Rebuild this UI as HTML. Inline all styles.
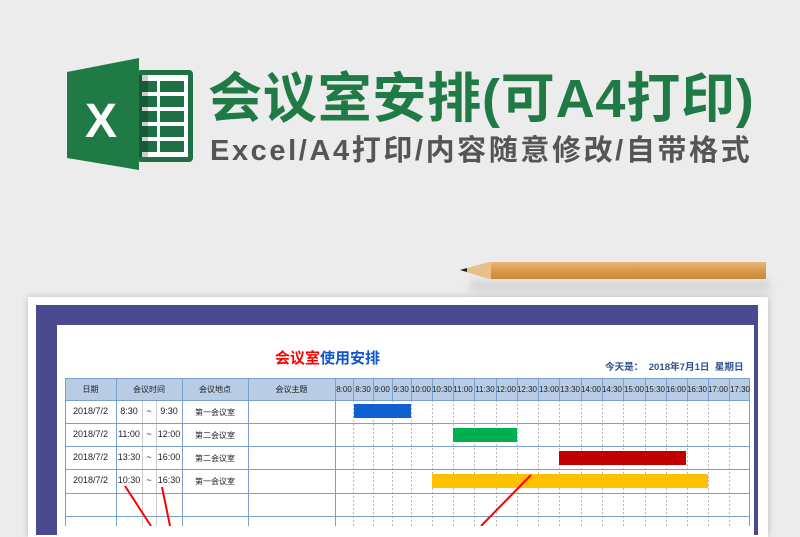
<!DOCTYPE html>
<html><head><meta charset="utf-8"><style>
*{margin:0;padding:0;box-sizing:border-box}
body{width:800px;height:526px;overflow:hidden;background:#ececec;position:relative;font-family:"Liberation Sans","Noto Sans CJK SC",sans-serif}
.a{position:absolute}
.t1{left:208px;top:68px;font-size:54px;font-weight:bold;color:#1f7a45;letter-spacing:0.8px;white-space:nowrap;line-height:62px}
.t2{left:210px;top:133px;font-size:29px;font-weight:bold;color:#555;white-space:nowrap;line-height:36px;letter-spacing:2.6px}
.cell{position:absolute;font-size:9px;color:#222;text-align:center;white-space:nowrap}
.hd{font-size:8px}
</style></head><body>
<svg class="a" style="left:0;top:0" width="200" height="180">
<rect x="137" y="70" width="56" height="92" rx="4" fill="#1e7145"/>
<rect x="142" y="75" width="46" height="82" fill="#fff"/>
<g fill="#1e7145">
<rect x="140" y="81" width="17" height="11"/><rect x="160" y="81" width="24" height="11"/>
<rect x="140" y="96" width="17" height="11"/><rect x="160" y="96" width="24" height="11"/>
<rect x="140" y="111" width="17" height="11"/><rect x="160" y="111" width="24" height="11"/>
<rect x="140" y="126" width="17" height="11"/><rect x="160" y="126" width="24" height="11"/>
<rect x="140" y="141" width="17" height="11"/><rect x="160" y="141" width="24" height="11"/>
</g>
<rect x="138" y="75" width="10" height="82" fill="#000" opacity="0.2"/>
<polygon points="67,72 139,58 139,170 67,158" fill="#1f7a45"/>
<text x="101" y="137" font-family="Liberation Sans" font-weight="bold" font-size="48" fill="#fff" text-anchor="middle">X</text>
</svg>
<div class="a t1">会议室安排(可A4打印)</div>
<div class="a t2">Excel/A4打印/内容随意修改/自带格式</div>
<div class="a" style="left:470px;top:280px;width:300px;height:12px;background:#d6d6d6;filter:blur(4px)"></div>
<div class="a" style="left:490px;top:262px;width:276px;height:17px;background:linear-gradient(#e8b878,#d99a4a 50%,#c9893a)"></div>
<svg class="a" style="left:457px;top:262px" width="36" height="17"><polygon points="3,8 32,0 34,0 34,17 32,17" fill="#e8c08a"/><polygon points="3,8 10,6 10,10" fill="#222"/></svg>
<div class="a" style="left:28px;top:297px;width:740px;height:240px;background:#fff;box-shadow:0 0 6px #bbb"></div>
<div class="a" style="left:36px;top:305px;width:722px;height:230px;background:#4a4a90"></div>
<div class="a" style="left:57px;top:325px;width:697px;height:210px;background:#fff"></div>
<div class="a" style="left:275px;top:347px;font-size:15px;font-weight:bold;white-space:nowrap"><span style="color:#f00">会议室</span><span style="color:#1155cc">使用安排</span></div>
<div class="a" style="left:605px;top:359px;font-size:9.6px;color:#2f4f8f;font-weight:bold;white-space:nowrap">今天是：&nbsp;&nbsp;2018年7月1日&nbsp;&nbsp;星期日</div>
<svg class="a" style="left:0;top:0" width="800" height="526">
<rect x="65" y="378" width="685" height="22" fill="#b8cce4"/>
<g stroke="#bbb" stroke-dasharray="2,2" stroke-width="1">
<line x1="353.5" y1="400" x2="353.5" y2="526"/><line x1="373.5" y1="400" x2="373.5" y2="526"/><line x1="392.5" y1="400" x2="392.5" y2="526"/><line x1="411.5" y1="400" x2="411.5" y2="526"/><line x1="432.5" y1="400" x2="432.5" y2="526"/><line x1="453.5" y1="400" x2="453.5" y2="526"/><line x1="474.5" y1="400" x2="474.5" y2="526"/><line x1="496.5" y1="400" x2="496.5" y2="526"/><line x1="517.5" y1="400" x2="517.5" y2="526"/><line x1="538.5" y1="400" x2="538.5" y2="526"/><line x1="559.5" y1="400" x2="559.5" y2="526"/><line x1="581.5" y1="400" x2="581.5" y2="526"/><line x1="602.5" y1="400" x2="602.5" y2="526"/><line x1="623.5" y1="400" x2="623.5" y2="526"/><line x1="645.5" y1="400" x2="645.5" y2="526"/><line x1="666.5" y1="400" x2="666.5" y2="526"/><line x1="687.5" y1="400" x2="687.5" y2="526"/><line x1="708.5" y1="400" x2="708.5" y2="526"/><line x1="729.5" y1="400" x2="729.5" y2="526"/>
</g>
<g stroke="#ccc"><line x1="142.5" y1="400" x2="142.5" y2="526"/><line x1="156.5" y1="400" x2="156.5" y2="526"/></g>
<g stroke="#7aa0d0" stroke-width="1">
<line x1="65" y1="378.5" x2="750" y2="378.5"/><line x1="65" y1="400.5" x2="750" y2="400.5"/><line x1="65" y1="423.5" x2="750" y2="423.5"/><line x1="65" y1="446.5" x2="750" y2="446.5"/><line x1="65" y1="469.5" x2="750" y2="469.5"/><line x1="65" y1="493.5" x2="750" y2="493.5"/><line x1="65" y1="516.5" x2="750" y2="516.5"/>
<line x1="65.5" y1="378" x2="65.5" y2="526"/><line x1="116.5" y1="378" x2="116.5" y2="526"/><line x1="182.5" y1="378" x2="182.5" y2="526"/><line x1="248.5" y1="378" x2="248.5" y2="526"/><line x1="335.5" y1="378" x2="335.5" y2="526"/><line x1="749.5" y1="378" x2="749.5" y2="526"/>
</g>
<g stroke="#7aa0d0"><line x1="353.5" y1="378" x2="353.5" y2="400"/><line x1="373.5" y1="378" x2="373.5" y2="400"/><line x1="392.5" y1="378" x2="392.5" y2="400"/><line x1="411.5" y1="378" x2="411.5" y2="400"/><line x1="432.5" y1="378" x2="432.5" y2="400"/><line x1="453.5" y1="378" x2="453.5" y2="400"/><line x1="474.5" y1="378" x2="474.5" y2="400"/><line x1="496.5" y1="378" x2="496.5" y2="400"/><line x1="517.5" y1="378" x2="517.5" y2="400"/><line x1="538.5" y1="378" x2="538.5" y2="400"/><line x1="559.5" y1="378" x2="559.5" y2="400"/><line x1="581.5" y1="378" x2="581.5" y2="400"/><line x1="602.5" y1="378" x2="602.5" y2="400"/><line x1="623.5" y1="378" x2="623.5" y2="400"/><line x1="645.5" y1="378" x2="645.5" y2="400"/><line x1="666.5" y1="378" x2="666.5" y2="400"/><line x1="687.5" y1="378" x2="687.5" y2="400"/><line x1="708.5" y1="378" x2="708.5" y2="400"/><line x1="729.5" y1="378" x2="729.5" y2="400"/></g>
<rect x="354" y="404" width="57" height="14" fill="#1060d0"/>
<rect x="453" y="428" width="64" height="14" fill="#00b050"/>
<rect x="559" y="451" width="127" height="14" fill="#c00000"/>
<rect x="432" y="474" width="276" height="14" fill="#ffc000"/>
<g font-family="Liberation Sans" font-size="8" fill="#222" text-anchor="middle">
<text x="344" y="392">8:00</text><text x="363" y="392">8:30</text><text x="382" y="392">9:00</text><text x="401" y="392">9:30</text><text x="421" y="392">10:00</text><text x="442" y="392">10:30</text><text x="463" y="392">11:00</text><text x="485" y="392">11:30</text><text x="506" y="392">12:00</text><text x="527" y="392">12:30</text><text x="549" y="392">13:00</text><text x="570" y="392">13:30</text><text x="591" y="392">14:00</text><text x="612" y="392">14:30</text><text x="634" y="392">15:00</text><text x="655" y="392">15:30</text><text x="676" y="392">16:00</text><text x="697" y="392">16:30</text><text x="718" y="392">17:00</text><text x="740" y="392">17:30</text>
</g>
<g stroke="#f00" stroke-width="2"><line x1="125" y1="486" x2="151" y2="526"/><line x1="162" y1="487" x2="170" y2="526"/><line x1="531" y1="475" x2="481" y2="526"/></g>
</svg>
<div class="cell hd" style="left:65px;top:384px;width:51px">日期</div>
<div class="cell hd" style="left:116px;top:384px;width:66px">会议时间</div>
<div class="cell hd" style="left:182px;top:384px;width:66px">会议地点</div>
<div class="cell hd" style="left:248px;top:384px;width:87px">会议主题</div>
<div class="cell" style="left:65px;top:406px;width:51px">2018/7/2</div><div class="cell" style="left:116px;top:406px;width:26px">8:30</div><div class="cell" style="left:142px;top:406px;width:14px">~</div><div class="cell" style="left:156px;top:406px;width:26px">9:30</div><div class="cell hd" style="left:182px;top:407px;width:66px">第一会议室</div>
<div class="cell" style="left:65px;top:429px;width:51px">2018/7/2</div><div class="cell" style="left:116px;top:429px;width:26px">11:00</div><div class="cell" style="left:142px;top:429px;width:14px">~</div><div class="cell" style="left:156px;top:429px;width:26px">12:00</div><div class="cell hd" style="left:182px;top:430px;width:66px">第二会议室</div>
<div class="cell" style="left:65px;top:452px;width:51px">2018/7/2</div><div class="cell" style="left:116px;top:452px;width:26px">13:30</div><div class="cell" style="left:142px;top:452px;width:14px">~</div><div class="cell" style="left:156px;top:452px;width:26px">16:00</div><div class="cell hd" style="left:182px;top:453px;width:66px">第二会议室</div>
<div class="cell" style="left:65px;top:475px;width:51px">2018/7/2</div><div class="cell" style="left:116px;top:475px;width:26px">10:30</div><div class="cell" style="left:142px;top:475px;width:14px">~</div><div class="cell" style="left:156px;top:475px;width:26px">16:30</div><div class="cell hd" style="left:182px;top:476px;width:66px">第一会议室</div>
</body></html>
